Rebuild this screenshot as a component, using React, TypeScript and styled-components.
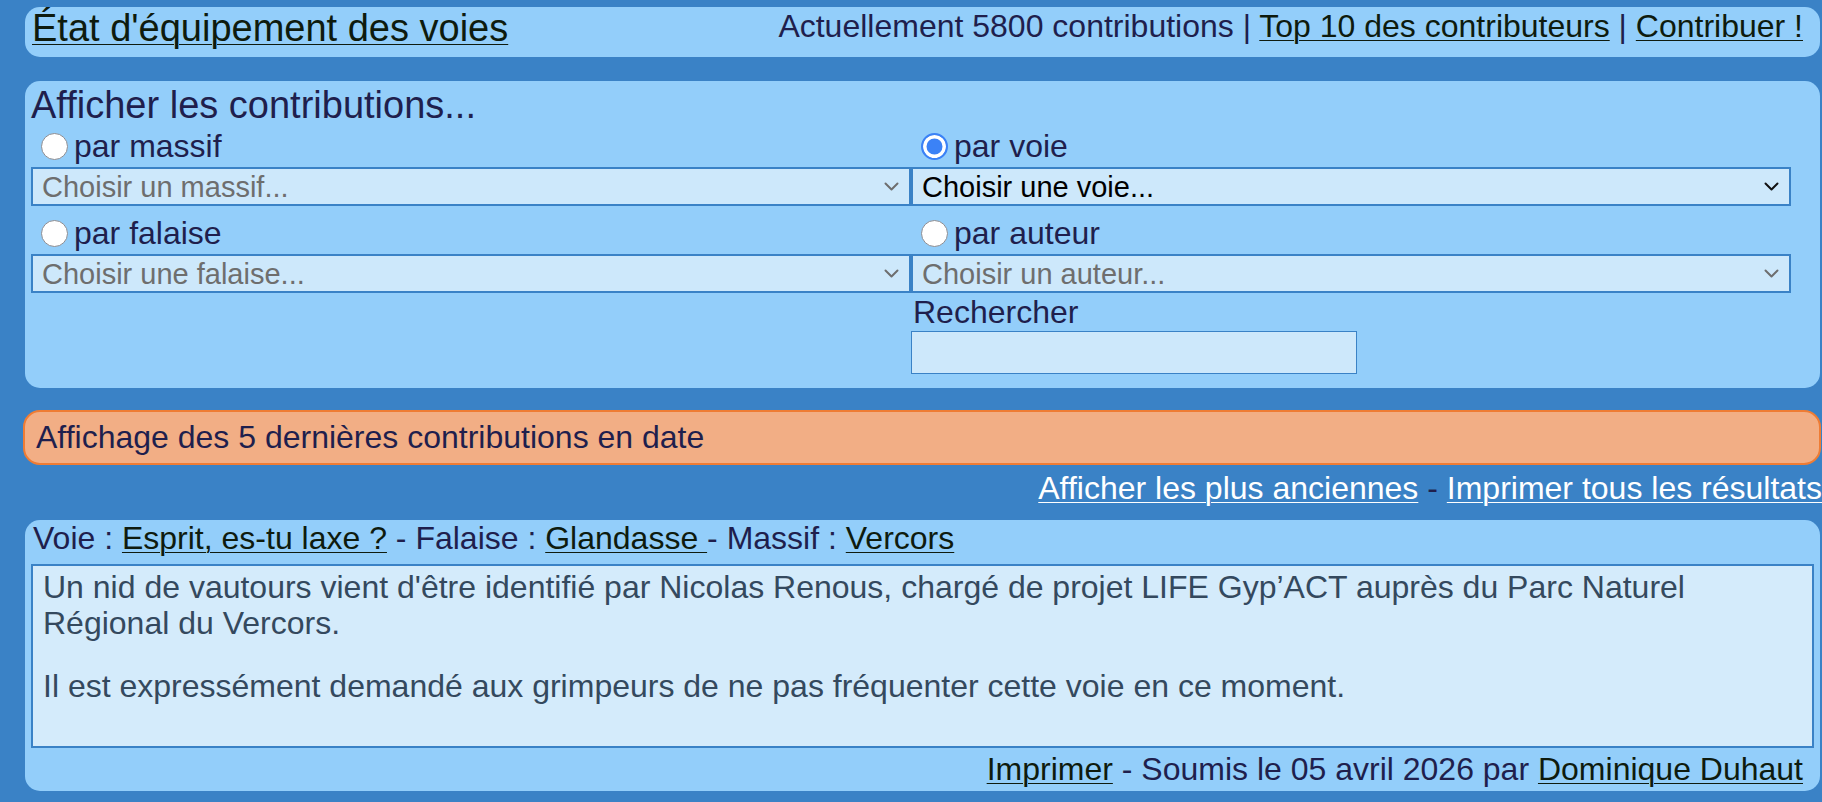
import React from "react";
import styled, { createGlobalStyle } from "styled-components";

const GlobalStyle = createGlobalStyle`
  html, body {
    margin: 0;
    padding: 0;
    background: #3a82c6;
    overflow: hidden;
  }
  body {
    font-family: "Liberation Sans", Arial, Helvetica, sans-serif;
    color: #1f1f4d;
  }
`;

const C = {
  bg: "#3a82c6",
  panel: "#93cefa",
  field: "#cde8fb",
  note: "#d4ebfb",
  navy: "#1f1f4d",
  link: "#0e1b0e",
  gray: "#6e6e6e",
};

const Page = styled.div`
  padding: 7px 0 0 25px;
  box-sizing: border-box;
  width: 1822px;
  height: 802px;
`;

const Link = styled.a<{ $light?: boolean }>`
  color: ${(p) => (p.$light ? "#ffffff" : C.link)};
  text-decoration: underline;
  text-decoration-thickness: 1px;
  text-underline-offset: 3px;
  cursor: pointer;
`;

const Header = styled.header`
  display: flex;
  align-items: flex-start;
  justify-content: space-between;
  height: 50px;
  box-sizing: border-box;
  margin-right: 2px;
  padding: 0 17px 0 7px;
  background: ${C.panel};
  border-radius: 15px;
`;

const Title = styled.h1`
  margin: 0;
  font-size: 38px;
  font-weight: normal;
  line-height: 42px;
`;

const Nav = styled.nav`
  font-size: 32px;
  line-height: 38px;
  color: ${C.navy};
  white-space: nowrap;
`;

const Panel = styled.section`
  margin: 24px 2px 0 0;
  padding: 3px 6px 14px 6px;
  background: ${C.panel};
  border-radius: 15px;
`;

const Heading = styled.h2`
  margin: 0;
  font-size: 38px;
  font-weight: normal;
  line-height: 42px;
  color: ${C.navy};
`;

const FilterGrid = styled.div`
  display: grid;
  grid-template-columns: 880px 880px;
  row-gap: 7px;
`;

const Cell = styled.div<{ $pullUp?: boolean }>`
  display: flex;
  flex-direction: column;
  margin-top: ${(p) => (p.$pullUp ? "-6px" : "0")};
`;

const OptionLabel = styled.label`
  display: flex;
  align-items: center;
  gap: 6px;
  height: 41px;
  padding-left: 10px;
  font-size: 32px;
  color: ${C.navy};
  cursor: pointer;
`;

const Radio = styled.input.attrs({ type: "radio" })`
  appearance: none;
  margin: 0;
  width: 27px;
  height: 27px;
  border-radius: 50%;
  box-sizing: border-box;
  border: 1.5px solid #8d8d92;
  background: #ffffff;
  flex: none;
  &:checked {
    border: 2px solid #3b82f6;
    background: #3b82f6;
    box-shadow: inset 0 0 0 3.5px #ffffff;
  }
`;

const SelectBox = styled.div`
  display: flex;
  align-items: center;
  height: 39px;
  box-sizing: border-box;
  border: 2px solid ${C.bg};
  background: ${C.field};
  padding: 0 10px 0 0;
`;

const Select = styled.select<{ $active?: boolean }>`
  appearance: none;
  flex: 1;
  height: 100%;
  border: none;
  outline: none;
  background: transparent;
  padding: 0 0 0 9px;
  font-family: inherit;
  font-size: 29px;
  color: ${(p) => (p.$active ? "#000000" : C.gray)};
`;

const Chevron = styled.svg`
  width: 15px;
  height: 9px;
  flex: none;
`;

const SearchLabel = styled.div`
  height: 37px;
  display: flex;
  align-items: center;
  padding-left: 2px;
  font-size: 32px;
  color: ${C.navy};
`;

const SearchInput = styled.input`
  width: 446px;
  height: 43px;
  box-sizing: border-box;
  border: 1.5px solid ${C.bg};
  background: ${C.field};
  font-family: inherit;
  font-size: 29px;
  outline: none;
`;

const Notice = styled.div`
  margin: 22px 1px 0 -2px;
  height: 55px;
  box-sizing: border-box;
  display: flex;
  align-items: center;
  padding-left: 11px;
  background: #f2ae85;
  border: 2px solid #ef7c34;
  border-radius: 17px;
  font-size: 32px;
  color: ${C.navy};
`;

const ResultLinks = styled.div`
  height: 55px;
  box-sizing: border-box;
  padding-top: 5px;
  text-align: right;
  font-size: 32px;
  line-height: 37px;
  color: ${C.navy};
  white-space: nowrap;
`;

const Result = styled.article`
  margin-right: 2px;
  height: 271px;
  box-sizing: border-box;
  padding: 0 6px 0 6px;
  background: ${C.panel};
  border-radius: 15px;
  display: flex;
  flex-direction: column;
`;

const Meta = styled.div`
  font-size: 32px;
  line-height: 37px;
  padding-left: 2px;
  margin-bottom: 7px;
  color: ${C.navy};
`;

const NoteBox = styled.div`
  height: 184px;
  box-sizing: border-box;
  border: 2px solid ${C.bg};
  background: ${C.note};
  padding: 3px 10px;
  font-size: 32px;
  line-height: 36px;
  color: #34495e;
`;

const NotePara = styled.p`
  margin: 0;
  & + & {
    margin-top: 27px;
  }
`;

const Footer = styled.div`
  margin-top: 3px;
  text-align: right;
  padding-right: 11px;
  font-size: 32px;
  line-height: 37px;
  color: ${C.navy};
`;

const ChevronIcon = ({ color }: { color: string }) => (
  <Chevron viewBox="0 0 15 9">
    <polyline points="1.5,1.5 7.5,7.5 13.5,1.5" fill="none" stroke={color} strokeWidth="2" strokeLinecap="round" strokeLinejoin="round" />
  </Chevron>
);

type Filter = { id: string; label: string; placeholder: string; active?: boolean };

const filters: Filter[] = [
  { id: "massif", label: "par massif", placeholder: "Choisir un massif..." },
  { id: "voie", label: "par voie", placeholder: "Choisir une voie...", active: true },
  { id: "falaise", label: "par falaise", placeholder: "Choisir une falaise..." },
  { id: "auteur", label: "par auteur", placeholder: "Choisir un auteur..." },
];

const note = [
  "Un nid de vautours vient d'être identifié par Nicolas Renous, chargé de projet LIFE Gyp’ACT auprès du Parc Naturel Régional du Vercors.",
  "Il est expressément demandé aux grimpeurs de ne pas fréquenter cette voie en ce moment.",
];

export default function App() {
  return (
    <>
      <GlobalStyle />
      <Page>
        <Header>
          <Title>
            <Link>État d'équipement des voies</Link>
          </Title>
          <Nav>
            Actuellement 5800 contributions | <Link>Top 10 des contributeurs</Link> | <Link>Contribuer !</Link>
          </Nav>
        </Header>

        <Panel>
          <Heading>Afficher les contributions...</Heading>
          <FilterGrid>
            {filters.map((f) => (
              <Cell key={f.id}>
                <OptionLabel>
                  <Radio name="mode" defaultChecked={!!f.active} />
                  {f.label}
                </OptionLabel>
                <SelectBox>
                  <Select $active={f.active} defaultValue="">
                    <option value="">{f.placeholder}</option>
                  </Select>
                  <ChevronIcon color={f.active ? "#111111" : "#6e6e6e"} />
                </SelectBox>
              </Cell>
            ))}
            <Cell $pullUp />
            <Cell $pullUp>
              <SearchLabel>Rechercher</SearchLabel>
              <SearchInput type="text" />
            </Cell>
          </FilterGrid>
        </Panel>

        <Notice>Affichage des 5 dernières contributions en date</Notice>

        <ResultLinks>
          <Link $light>Afficher les plus anciennes</Link> - <Link $light>Imprimer tous les résultats</Link>
        </ResultLinks>

        <Result>
          <Meta>
            Voie : <Link>Esprit, es-tu laxe ?</Link> - Falaise : <Link>Glandasse </Link>- Massif : <Link>Vercors</Link>
          </Meta>
          <NoteBox>
            {note.map((p, i) => (
              <NotePara key={i}>{p}</NotePara>
            ))}
          </NoteBox>
          <Footer>
            <Link>Imprimer</Link> - Soumis le 05 avril 2026 par <Link>Dominique Duhaut</Link>
          </Footer>
        </Result>
      </Page>
    </>
  );
}
